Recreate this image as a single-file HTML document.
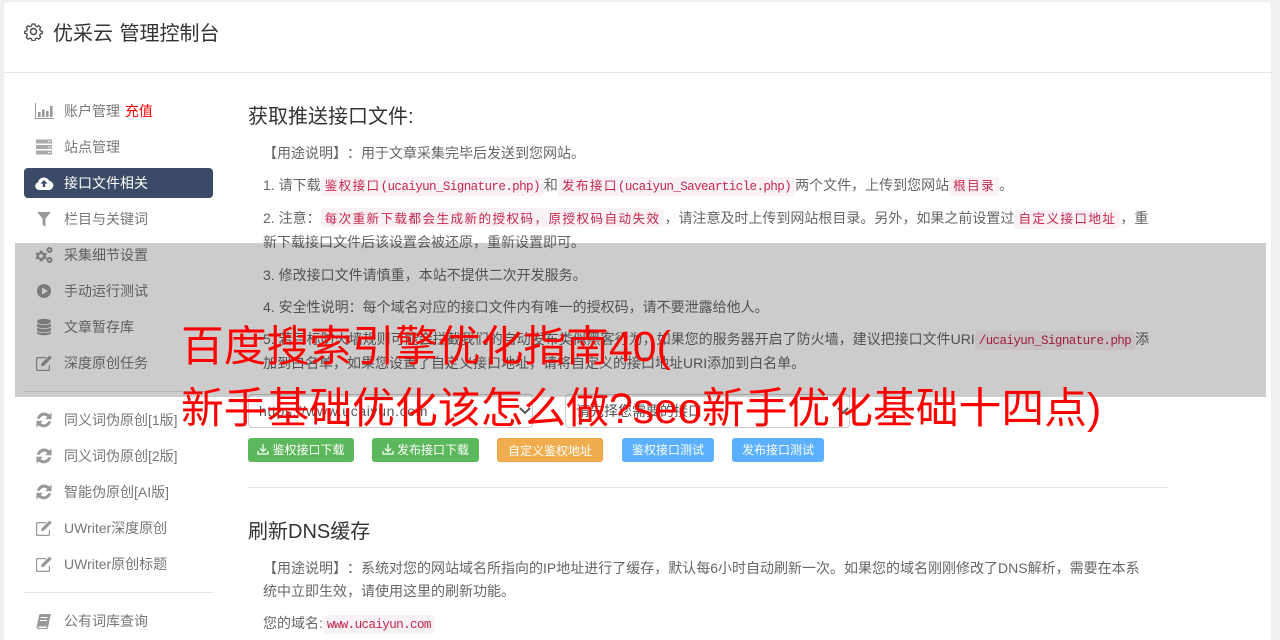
<!DOCTYPE html>
<html lang="zh-CN"><head><meta charset="utf-8"><title>优采云 管理控制台</title>
<style>
*{box-sizing:border-box;margin:0;padding:0}
html,body{width:1280px;height:640px;overflow:hidden;background:#f0f0f0}
body{position:relative;font-family:"Liberation Sans","Noto Sans CJK SC",sans-serif;font-size:14px;color:#666;text-spacing-trim:space-all;text-autospace:no-autospace}
i{font-style:normal;font-family:"Noto Sans CJK TC",sans-serif}
.card{position:absolute;left:4px;top:2px;width:1267px;height:660px;background:#fff;border-radius:4px;box-shadow:0 0 1px #ddd}
.hd{position:absolute;left:4px;top:72px;width:1267px;height:1px;background:#e6e6e6}
.a{position:absolute;white-space:nowrap}
.t{font-size:20px;line-height:28px;color:#333;word-spacing:1px}
.n{left:64px;line-height:20px;color:#777;font-size:14px}
svg.i{position:absolute;left:34px;width:20px;height:20px;fill:#999}
.p{left:263px;line-height:20px;color:#666;font-size:14px}
.h{left:248px;font-size:20px;line-height:28px;color:#333}
code{display:inline-block;height:19px;line-height:19px;background:#f9f2f4;color:#c7254e;border-radius:4px;padding:0 4px;font-family:"Liberation Sans","Noto Sans CJK SC",sans-serif;font-size:12.6px;letter-spacing:1.4px;vertical-align:-1px;position:relative;top:-1px}
code b{font-weight:normal;font-family:"Liberation Mono",monospace;letter-spacing:-.63px}
.sel{position:absolute;top:394px;width:285px;height:34px;border:1px solid #ccc;border-radius:4px;background:#fff;padding-left:10px;line-height:32px;color:#555;white-space:nowrap}
.btn{position:absolute;top:438px;height:24px;border-radius:3px;color:#fff;font-size:12px;line-height:24px;text-align:center;white-space:nowrap}
.g{background:#5cb85c}.o{background:#f0ad4e;border:1px solid #eea236;line-height:24px}.b{background:#5bb0ff}
.btn svg{width:12px;height:12px;vertical-align:-1px;margin-right:3px}
.ln{position:absolute;background:#e4e4e4;height:1px}
.ov{position:absolute;left:15px;top:243px;width:1251px;height:154px;background:rgba(0,0,0,.2)}
.r{left:181px;font-size:42.8px;line-height:62px;color:#f00}
</style></head><body>
<div class="card"></div><div class="hd"></div>
<svg class="a" style="left:24px;top:22px;width:19px;height:19px" viewBox="0 0 24 24" fill="none" stroke="#444" stroke-width="1.800" stroke-linejoin="round"><circle cx="12" cy="12" r="3.800"/><path d="M10 2.500h4l.7 2.800 2.300 1 2.500-1.500 2.700 2.800-1.500 2.400 1 2.300 2.800.7v2.800l-2.800.7-1 2.300 1.500 2.400-2.700 2.800-2.500-1.500-2.300 1-.7 2.800h-4l-.7-2.800-2.300-1-2.500 1.500-2.700-2.800 1.500-2.400-1-2.300-2.800-.7v-2.800l2.800-.7 1-2.300-1.500-2.400 2.700-2.800 2.500 1.500 2.300-1z" transform="translate(1.300 .3) scale(.89)"/></svg>
<div class="a t" style="left:53px;top:20px">优采云 管理控制台</div>

<div class="a" style="left:24px;top:168px;width:189px;height:30px;background:#3b4a66;border-radius:4px"></div>
<svg class="i" style="top:101px;left:34px" viewBox="0 0 20 20"><path d="M1 2h1v15h18v1H1z"/><path d="M4 11h2.600v5H4zM8 8.500h2.600V16H8zM12 10h2.600v6H12zM16 5h2.600v11H16z"/></svg>
<div class="a n" style="top:101px">账户管理 <span style="color:#f00;margin-left:1px">充值</span></div>
<svg class="i" style="top:137px" viewBox="0 0 20 20" fill-rule="evenodd"><path fill="#aaa" d="M2 2.500h16v4H2zM14 4v1h1.500V4zM16 4v1h1V4zM2 8h16v4H2zM14 9.500v1h1.500v-1zM16 9.500v1h1v-1zM2 13.500h16v4H2zM14 15v1h1.500v-1zM16 15v1h1v-1z"/></svg>
<div class="a n" style="top:137px">站点管理</div>
<svg class="i" style="top:173px;fill:#fff" viewBox="0 0 20 20"><path d="M5 17a4 4 0 0 1-1-7.800 6 6 0 0 1 11.300-1.300A4.600 4.600 0 0 1 15.500 17z"/><path fill="#3b4a66" d="M10 7l3.500 3.600h-2.300V14H8.800v-3.400H6.500z"/></svg>
<div class="a n" style="top:173px;color:#fff">接口文件相关</div>
<svg class="i" style="top:209px" viewBox="0 0 20 20"><path d="M3 3h14l-5.500 6.500V18l-3-2.500v-6z"/></svg>
<div class="a n" style="top:209px">栏目与关键词</div>
<svg class="i" style="top:245px" viewBox="0 0 20 20"><path fill-rule="evenodd" d="M7 5.500l1.500.3.500 1.600 1.400.8 1.500-.6 1 1.500-1.100 1.100v1.600l1.100 1.100-1 1.500-1.500-.6-1.400.8-.5 1.600H6l-.5-1.600-1.400-.8-1.500.6-1-1.500 1.100-1.100V10l-1.100-1.100 1-1.500 1.500.6 1.400-.8L6 5.600zM7 9a2 2 0 1 0 0 4 2 2 0 0 0 0-4z"/><path fill-rule="evenodd" d="M15.500 2a3 3 0 1 1 0 6 3 3 0 0 1 0-6zm0 2a1 1 0 1 0 0 2 1 1 0 0 0 0-2zM15.500 12a3 3 0 1 1 0 6 3 3 0 0 1 0-6zm0 2a1 1 0 1 0 0 2 1 1 0 0 0 0-2z"/></svg>
<div class="a n" style="top:245px">采集细节设置</div>
<svg class="i" style="top:281px" viewBox="0 0 20 20"><path fill-rule="evenodd" d="M10 3a7 7 0 1 1 0 14 7 7 0 0 1 0-14zM8 6.500v7l6-3.500z"/></svg>
<div class="a n" style="top:281px">手动运行测试</div>
<svg class="i" style="top:317px" viewBox="0 0 20 20"><ellipse cx="10" cy="4.500" rx="7" ry="2.800"/><path d="M3 6.500c1 2 13 2 14 0V9c-1 3-13 3-14 0zM3 10.500c1 2 13 2 14 0V13c-1 3-13 3-14 0zM3 14.500c1 2 13 2 14 0V16c-1 3-13 3-14 0z"/></svg>
<div class="a n" style="top:317px">文章暂存库</div>
<svg class="i" style="top:353px" viewBox="0 0 20 20"><path d="M3.500 4H12v1.300H4a.8.8 0 0 0-.8.8V16c0 .5.3.8.8.8h10c.5 0 .8-.3.8-.8v-4H16v4.500c0 1-.7 1.500-1.500 1.500h-11C2.600 18 2 17.400 2 16.500V5.500C2 4.600 2.600 4 3.500 4z"/><path d="M15.500 2.500l2.300 2.300-7.800 7.800-3 .7.700-3z"/></svg>
<div class="a n" style="top:353px">深度原创任务</div>
<div class="ln" style="left:24px;top:391px;width:189px"></div>
<svg class="i" style="top:410px" viewBox="0 0 20 20"><path d="M10 2.500a7.500 7.500 0 0 1 5.200 2.100L17.500 2.500V9.200h-6.400l2.200-2.200A4.400 4.400 0 0 0 5.900 8.800H2.900A7.500 7.500 0 0 1 10 2.500zM2.500 10.800h6.400l-2.200 2.200a4.400 4.400 0 0 0 7.400-1.800h3a7.500 7.500 0 0 1-12.300 4.200L2.500 17.500z"/></svg>
<div class="a n" style="top:410px">同义词伪原创[1版]</div>
<svg class="i" style="top:446px" viewBox="0 0 20 20"><path d="M10 2.500a7.500 7.500 0 0 1 5.200 2.100L17.500 2.500V9.200h-6.400l2.200-2.200A4.400 4.400 0 0 0 5.900 8.800H2.900A7.500 7.500 0 0 1 10 2.500zM2.500 10.800h6.400l-2.200 2.200a4.400 4.400 0 0 0 7.400-1.800h3a7.500 7.500 0 0 1-12.300 4.200L2.500 17.500z"/></svg>
<div class="a n" style="top:446px">同义词伪原创[2版]</div>
<svg class="i" style="top:482px" viewBox="0 0 20 20"><path d="M10 2.500a7.500 7.500 0 0 1 5.200 2.100L17.500 2.500V9.200h-6.400l2.200-2.200A4.400 4.400 0 0 0 5.900 8.800H2.900A7.500 7.500 0 0 1 10 2.500zM2.500 10.800h6.400l-2.200 2.200a4.400 4.400 0 0 0 7.400-1.800h3a7.500 7.500 0 0 1-12.300 4.200L2.500 17.500z"/></svg>
<div class="a n" style="top:482px">智能伪原创[AI版]</div>
<svg class="i" style="top:518px" viewBox="0 0 20 20"><path d="M3.500 4H12v1.300H4a.8.8 0 0 0-.8.8V16c0 .5.3.8.8.8h10c.5 0 .8-.3.8-.8v-4H16v4.500c0 1-.7 1.500-1.500 1.500h-11C2.600 18 2 17.400 2 16.500V5.500C2 4.600 2.600 4 3.500 4z"/><path d="M15.500 2.500l2.300 2.300-7.800 7.800-3 .7.700-3z"/></svg>
<div class="a n" style="top:518px">UWriter深度原创</div>
<svg class="i" style="top:554px" viewBox="0 0 20 20"><path d="M3.500 4H12v1.300H4a.8.8 0 0 0-.8.8V16c0 .5.3.8.8.8h10c.5 0 .8-.3.8-.8v-4H16v4.500c0 1-.7 1.500-1.500 1.500h-11C2.600 18 2 17.400 2 16.500V5.500C2 4.600 2.600 4 3.500 4z"/><path d="M15.500 2.500l2.300 2.300-7.800 7.800-3 .7.700-3z"/></svg>
<div class="a n" style="top:554px">UWriter原创标题</div>
<div class="ln" style="left:24px;top:592px;width:189px"></div>
<svg class="i" style="top:611px" viewBox="0 0 20 20"><path d="M6 3h11l-.5 1.500L14 16.500c-.2 1-.8 1.500-1.800 1.500H4.500C3.200 18 2.500 17 2.800 15.800L5 4.500C5.200 3.500 5.400 3 6 3zm.5 3v1h7V6zm-.5 3v1h7V9zM4.500 15.500c-.5 1 0 1.500.8 1.500h7.200l.3-1.500z"/></svg>
<div class="a n" style="top:611px">公有词库查询</div>

<div class="a h" style="top:103px">获取推送接口文件:</div>
<div class="a p" style="top:143px">【用途说明】<i>：</i>用于文章采集完毕后发送到您网站。</div>
<div class="a p" style="top:175px">1. 请下载<code>鉴权接口<b>(ucaiyun_Signature.php)</b></code>和<code>发布接口<b>(ucaiyun_Savearticle.php)</b></code>两个文件<i>，</i>上传到您网站<code>根目录</code>。</div>
<div class="a p" style="top:208px">2. 注意<i>：</i><code>每次重新下载都会生成新的授权码<i>，</i>原授权码自动失效</code><i>，</i>请注意及时上传到网站根目录。另外<i>，</i>如果之前设置过<code>自定义接口地址</code><i>，</i>重</div>
<div class="a p" style="top:232px">新下载接口文件后该设置会被还原<i>，</i>重新设置即可。</div>
<div class="a p" style="top:265px">3. 修改接口文件请慎重<i>，</i>本站不提供二次开发服务。</div>
<div class="a p" style="top:297px">4. 安全性说明<i>：</i>每个域名对应的接口文件内有唯一的授权码<i>，</i>请不要泄露给他人。</div>
<div class="a p" style="top:329px">5. 若目标防火墙规则可能会拦截我们的自动发布类似黑客行为<i>，</i>如果您的服务器开启了防火墙<i>，</i>建议把接口文件URI<code><b>/ucaiyun_Signature.php</b></code>添</div>
<div class="a p" style="top:353px">加到白名单<i>，</i>如果您设置了自定义接口地址<i>，</i>请将自定义的接口地址URI添加到白名单。</div>

<div class="sel" style="left:248px;letter-spacing:.65px">https://www.ucaiyun.com</div>
<svg class="a" style="left:519px;top:407px;width:12px;height:8px" viewBox="0 0 12 8" fill="none" stroke="#555" stroke-width="2"><path d="M1 1l5 5 5-5"/></svg>
<div class="sel" style="left:565px">请先择您需要的接口</div>
<svg class="a" style="left:837px;top:407px;width:12px;height:8px" viewBox="0 0 12 8" fill="none" stroke="#555" stroke-width="2"><path d="M1 1l5 5 5-5"/></svg>

<div class="btn g" style="left:248px;width:106px"><svg viewBox="0 0 12 12" fill="none" stroke="#fff" stroke-width="1.200"><path d="M6 1v7M3 5.500L6 8.500l3-3M1 8v3h10V8"/></svg>鉴权接口下载</div>
<div class="btn g" style="left:372px;width:107px"><svg viewBox="0 0 12 12" fill="none" stroke="#fff" stroke-width="1.200"><path d="M6 1v7M3 5.500L6 8.500l3-3M1 8v3h10V8"/></svg>发布接口下载</div>
<div class="btn o" style="left:497px;width:106px">自定义鉴权地址</div>
<div class="btn b" style="left:622px;width:92px">鉴权接口测试</div>
<div class="btn b" style="left:732px;width:92px">发布接口测试</div>
<div class="ln" style="left:248px;top:487px;width:920px"></div>

<div class="a h" style="top:518px">刷新DNS缓存</div>
<div class="a p" style="top:558px">【用途说明】<i>：</i>系统对您的网站域名所指向的IP地址进行了缓存<i>，</i>默认每6小时自动刷新一次。如果您的域名刚刚修改了DNS解析<i>，</i>需要在本系</div>
<div class="a p" style="top:581px">统中立即生效<i>，</i>请使用这里的刷新功能。</div>
<div class="a p" style="top:613px">您的域名:<code><b>www.ucaiyun.com</b></code></div>

<div class="ov"></div>
<div class="a r" style="top:316px">百度搜索引擎优化指南40(</div>
<div class="a r" style="top:378px">新手基础优化该怎么做?seo新手优化基础十四点)</div>
</body></html>
